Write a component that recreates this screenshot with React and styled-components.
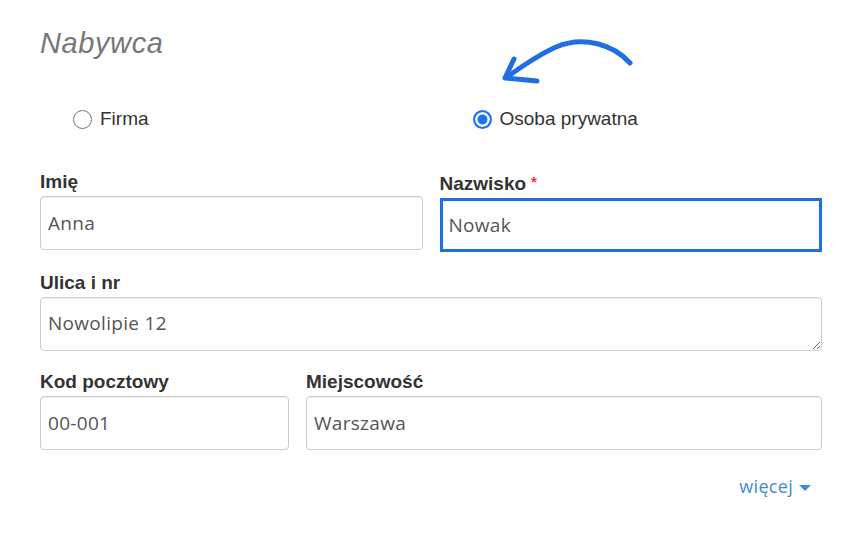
import React from "react";
import styled, { createGlobalStyle } from "styled-components";

const Global = createGlobalStyle`
  html, body { margin: 0; padding: 0; background: #fff; }
  body { font-family: "Liberation Sans", Arial, sans-serif; }
  * { box-sizing: border-box; }
`;

const Page = styled.div`
  position: relative;
  width: 861px;
  height: 542px;
  padding: 27px 39px 0 40px;
`;

const Title = styled.h2`
  margin: 0;
  font-family: "Liberation Sans", Arial, sans-serif;
  font-style: italic;
  font-weight: normal;
  font-size: 29px;
  line-height: 33px;
  letter-spacing: 0.6px;
  color: #777;
`;

const RadioRow = styled.div`
  display: grid;
  grid-template-columns: 1fr 1fr;
  column-gap: 17px;
  margin-top: 47px;
  height: 24px;
`;

const RadioLabel = styled.label`
  display: flex;
  align-items: center;
  gap: 8px;
  padding-left: 33px;
  font-size: 19px;
  color: #333;
  line-height: 24px;
`;

const RadioDot = styled.span`
  width: 19px;
  height: 19px;
  border-radius: 50%;
  border: ${(p) => (p.$checked ? "2px solid #1a73e8" : "1px solid #777")};
  background: ${(p) => (p.$checked ? "#1a73e8" : "#fff")};
  box-shadow: ${(p) => (p.$checked ? "inset 0 0 0 2.5px #fff" : "none")};
  flex: none;
`;

const Grid = styled.div`
  display: grid;
  grid-template-columns: ${(p) => p.$cols};
  column-gap: 17px;
  margin-top: ${(p) => p.$top}px;
`;

const Field = styled.div`
  display: flex;
  flex-direction: column;
  gap: 5px;
`;

const Label = styled.div`
  font-weight: bold;
  font-size: 19px;
  line-height: 19px;
  color: #333;
`;

const Star = styled.span`
  color: #e53935;
  font-size: 15px;
  margin-left: 5px;
  vertical-align: 3px;
`;

const Input = styled.input`
  height: 54px;
  width: 100%;
  margin: 0;
  font-family: "Open Sans", sans-serif;
  font-size: 19px;
  letter-spacing: 0.3px;
  color: #555;
  background: #fff;
  outline: none;
  border: ${(p) => (p.$focus ? "3px solid #1f6fe0" : "1px solid #ccc")};
  border-radius: ${(p) => (p.$focus ? "0" : "4px")};
  padding: ${(p) => (p.$focus ? "0 6px" : "0 7px")};
  box-shadow: ${(p) => (p.$focus ? "none" : "inset 0 1px 1px rgba(0,0,0,0.06)")};
`;

const Area = styled.textarea`
  height: 54px;
  width: 100%;
  margin: 0;
  display: block;
  font-family: "Open Sans", sans-serif;
  font-size: 19px;
  letter-spacing: 0.3px;
  line-height: 26px;
  color: #555;
  border: 1px solid #ccc;
  border-radius: 4px;
  padding: 12px 7px;
  resize: vertical;
  outline: none;
  box-shadow: inset 0 1px 1px rgba(0,0,0,0.06);
`;

const MoreRow = styled.div`
  display: flex;
  justify-content: flex-end;
  padding-right: 11px;
  margin-top: 24px;
`;

const More = styled.a`
  display: flex;
  align-items: center;
  gap: 6px;
  font-family: "Open Sans", sans-serif;
  font-size: 18px;
  line-height: 24px;
  letter-spacing: 0.3px;
  color: #3d8bd6;
  text-decoration: none;
  cursor: pointer;
`;

const Caret = styled.span`
  width: 0;
  height: 0;
  border-left: 6px solid transparent;
  border-right: 6px solid transparent;
  border-top: 6px solid #3d8bd6;
  margin-top: 3px;
`;

const ArrowSvg = styled.svg`
  position: absolute;
  left: 496px;
  top: 35px;
  overflow: visible;
`;

export default function App() {
  return (
    <>
      <Global />
      <Page>
        <Title>Nabywca</Title>
        <ArrowSvg width="145" height="55" viewBox="0 0 145 55">
          <path
            d="M134 28 C 118 10, 88 0, 60 12 C 42 20, 25 32, 11 42"
            fill="none"
            stroke="#1f6fe0"
            strokeWidth="5"
            strokeLinecap="round"
          />
          <path
            d="M18 24 L 9 43 L 41 46"
            fill="none"
            stroke="#1f6fe0"
            strokeWidth="5"
            strokeLinecap="round"
            strokeLinejoin="round"
          />
        </ArrowSvg>
        <RadioRow>
          <RadioLabel>
            <RadioDot />
            Firma
          </RadioLabel>
          <RadioLabel>
            <RadioDot $checked />
            Osoba prywatna
          </RadioLabel>
        </RadioRow>

        <Grid $cols="1fr 1fr" $top={41}>
          <Field>
            <Label>Imię</Label>
            <Input defaultValue="Anna" />
          </Field>
          <Field>
            <Label>
              Nazwisko<Star>*</Star>
            </Label>
            <Input $focus defaultValue="Nowak" />
          </Field>
        </Grid>

        <Grid $cols="1fr" $top={21}>
          <Field>
            <Label>Ulica i nr</Label>
            <Area defaultValue="Nowolipie 12" />
          </Field>
        </Grid>

        <Grid $cols="249px 1fr" $top={21}>
          <Field>
            <Label>Kod pocztowy</Label>
            <Input defaultValue="00-001" />
          </Field>
          <Field>
            <Label>Miejscowość</Label>
            <Input defaultValue="Warszawa" />
          </Field>
        </Grid>

        <MoreRow>
          <More>
            więcej
            <Caret />
          </More>
        </MoreRow>
      </Page>
    </>
  );
}
